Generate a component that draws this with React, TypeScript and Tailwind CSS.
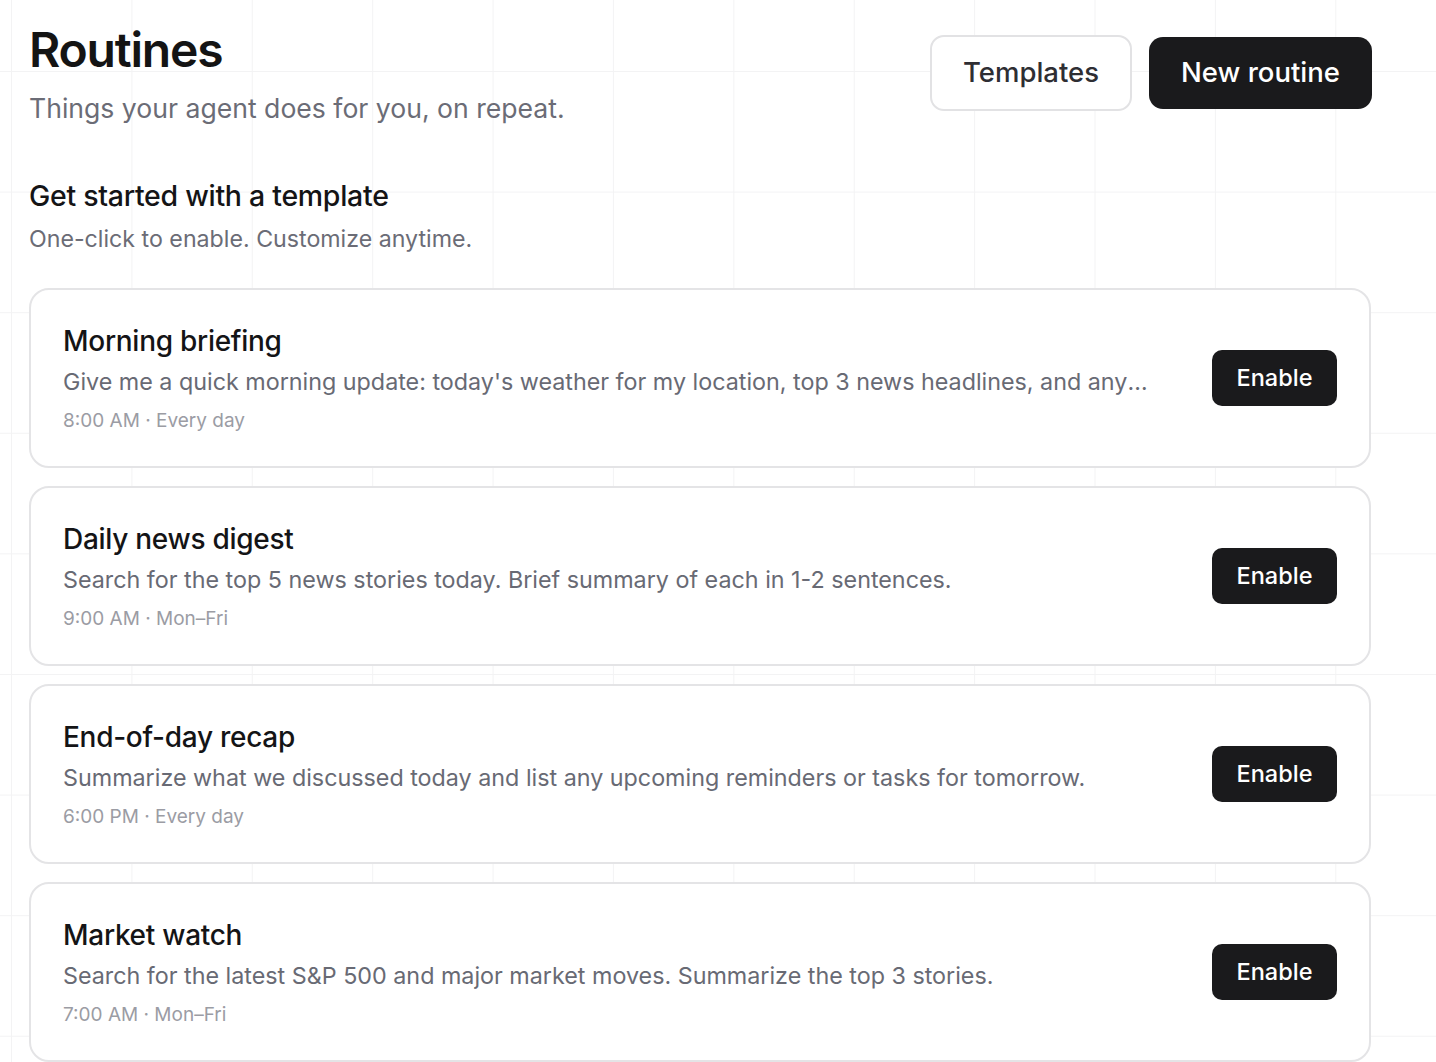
const templates = [
  {
    title: "Morning briefing",
    prompt:
      "Give me a quick morning update: today's weather for my location, top 3 news headlines, and any reminders or events I have coming up today.",
    time: "8:00 AM",
    days: "Every day",
  },
  {
    title: "Daily news digest",
    prompt: "Search for the top 5 news stories today. Brief summary of each in 1-2 sentences.",
    time: "9:00 AM",
    days: "Mon–Fri",
  },
  {
    title: "End-of-day recap",
    prompt: "Summarize what we discussed today and list any upcoming reminders or tasks for tomorrow.",
    time: "6:00 PM",
    days: "Every day",
  },
  {
    title: "Market watch",
    prompt: "Search for the latest S&P 500 and major market moves. Summarize the top 3 stories.",
    time: "7:00 AM",
    days: "Mon–Fri",
  },
];

function TemplateCard({ title, prompt, time, days }: (typeof templates)[number]) {
  return (
    <div className="flex h-[180px] items-center gap-[60px] rounded-[20px] border-2 border-[#e4e4e6] bg-white px-[32px]">
      <div className="flex min-w-0 flex-1 flex-col">
        <h3 className="text-[28px] leading-[36px] font-medium tracking-[-0.01em] text-[#141416]">{title}</h3>
        <p className="mt-[7px] truncate text-[23.3px] leading-[32px] text-[#686a74]">{prompt}</p>
        <p className="mt-[10px] text-[19px] leading-[26px] text-[#9b9ca4]">
          {time} · {days}
        </p>
      </div>
      <button className="h-[56px] w-[125px] shrink-0 rounded-[10px] bg-[#1a1a1c] text-[23.5px] font-medium text-white">
        Enable
      </button>
    </div>
  );
}

export default function App() {
  return (
    <div className="min-h-[1062px] bg-white bg-[linear-gradient(to_right,#f3f3f4_1px,transparent_1px),linear-gradient(to_bottom,#f3f3f4_1px,transparent_1px)] bg-[size:120.4px_120.6px] bg-[position:11px_71px] px-[29px] pt-[22px] font-['Inter',sans-serif]">
      <div className="w-[1342px]">
        <header className="flex items-start justify-between">
          <div>
            <h1 className="text-[48px] leading-[56px] font-semibold tracking-[-0.025em] text-[#141414]">Routines</h1>
            <p className="mt-[13px] text-[26.6px] leading-[34px] text-[#6b6c76]">Things your agent does for you, on repeat.</p>
          </div>
          <div className="mt-[13px] mr-[-1px] flex items-center gap-[17px]">
            <button className="h-[76px] w-[202px] rounded-[14px] border-2 border-[#e2e2e4] bg-white text-[27.5px] font-medium text-[#2e2e33]">
              Templates
            </button>
            <button className="h-[72px] w-[223px] rounded-[14px] bg-[#1a1a1c] text-[27.5px] font-medium text-white">
              New routine
            </button>
          </div>
        </header>

        <section className="mt-[53px]">
          <h2 className="text-[28.5px] leading-[36px] font-medium tracking-[-0.01em] text-[#141416]">Get started with a template</h2>
          <p className="mt-[10px] text-[23.2px] leading-[30px] text-[#6b6c76]">One-click to enable. Customize anytime.</p>

          <div className="mt-[34px] flex flex-col gap-[18px]">
            {templates.map((t) => (
              <TemplateCard key={t.title} {...t} />
            ))}
          </div>
        </section>
      </div>
    </div>
  );
}
